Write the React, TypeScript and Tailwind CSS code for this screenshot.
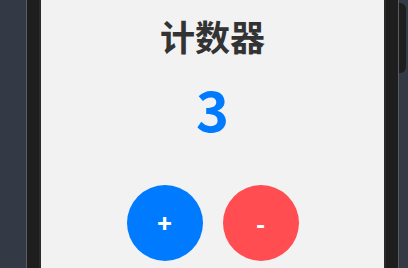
import React, { useState } from "react";

export default function App() {
  const [count, setCount] = useState(3);
  return (
    <div className="h-screen w-full overflow-hidden bg-[#333a45] flex justify-start pl-[26px]" style={{ fontFamily: '"Noto Sans CJK SC", sans-serif' }}>
      <div className="relative w-[373px] h-full border-x border-[#5a5f66] bg-[#1e1e1e] px-[12px]">
        <div className="absolute right-[-8px] top-[3px] w-[7px] h-[70px] rounded-r-[6px] bg-[#1e1e1e]" />
        <div className="h-full border-x-2 border-[#2a2a2a] bg-[#f2f2f2] flex flex-col items-center">
          <h1 className="mt-[14px] text-[35px] leading-[44px] font-bold text-[#333333]">计数器</h1>
          <div className="mt-[18px] text-[56px] leading-[64px] font-bold text-[#007aff]">{count}</div>
          <div className="mt-[45px] flex gap-[20px]">
            <button onClick={() => setCount(count + 1)} className="w-[76px] h-[76px] rounded-full bg-[#007aff] text-white text-[24px] font-black flex items-center justify-center">+</button>
            <button onClick={() => setCount(count - 1)} className="w-[76px] h-[76px] rounded-full bg-[#ff4d52] text-white text-[24px] font-black flex items-center justify-center">-</button>
          </div>
        </div>
      </div>
    </div>
  );
}
